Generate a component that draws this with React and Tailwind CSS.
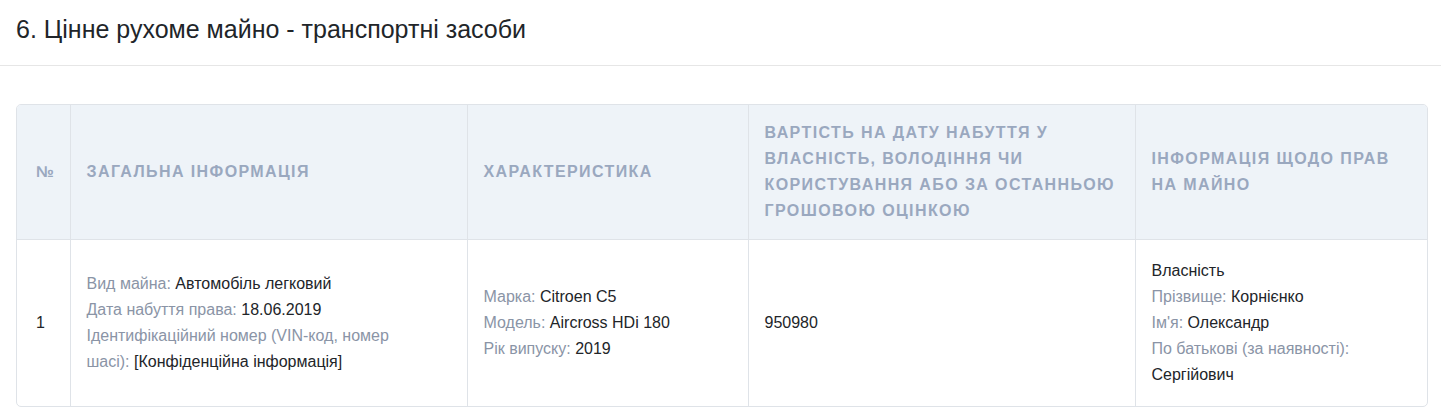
import React from "react";

const Label = ({ children }) => <span className="text-[#8a94a6]">{children}</span>;
const Val = ({ children }) => <span className="text-[#222529]">{children}</span>;

export default function App() {
  const thBase = "py-[15px] text-left align-middle font-bold uppercase text-[16px] leading-[26px] tracking-[1.4px] text-[#9aa8bf]";
  const th = "border-l border-[#dfe3e8] px-4 " + thBase;
  const tdBase = "py-[18px] align-middle text-[16px] leading-[26px] text-[#222529]";
  const td = "border-l border-[#dfe3e8] px-4 " + tdBase;
  return (
    <div className="min-h-[418px] bg-white font-['Liberation_Sans',Arial,sans-serif]">
      <div className="px-4 pt-[14px] pb-[21px]">
        <h2 className="text-[25px] leading-[30px] text-[#212529]">
          6. Цінне рухоме майно - транспортні засоби
        </h2>
      </div>
      <div className="border-t border-[#e6e6e6]" />
      <div className="ml-4 mr-[13px] mt-[38px] overflow-hidden rounded-[5px] border border-[#dfe3e8]">
        <table className="w-full table-fixed border-collapse">
          <colgroup>
            <col className="w-[53px]" />
            <col className="w-[397px]" />
            <col className="w-[281px]" />
            <col className="w-[387px]" />
            <col />
          </colgroup>
          <thead className="bg-[#eef3f8]">
            <tr className="border-b border-[#dfe3e8]">
              <th className={"pl-[19px] pr-2 " + thBase + " tracking-normal"}>№</th>
              <th className={th}>Загальна інформація</th>
              <th className={th}>Характеристика</th>
              <th className={th}>
                Вартість на дату набуття у власність, володіння чи користування або за останньою грошовою оцінкою
              </th>
              <th className={th}>Інформація щодо прав на майно</th>
            </tr>
          </thead>
          <tbody>
            <tr>
              <td className={"pl-[19px] pr-2 " + tdBase}>1</td>
              <td className={td}>
                <div>
                  <Label>Вид майна:</Label> <Val>Автомобіль легковий</Val>
                </div>
                <div>
                  <Label>Дата набуття права:</Label> <Val>18.06.2019</Val>
                </div>
                <div>
                  <Label>Ідентифікаційний номер (VIN-код, номер шасі):{"\u00a0"}</Label>
                  <Val>[Конфіденційна інформація]</Val>
                </div>
              </td>
              <td className={td}>
                <div>
                  <Label>Марка:</Label> <Val>Citroen C5</Val>
                </div>
                <div>
                  <Label>Модель:</Label> <Val>Aircross HDi 180</Val>
                </div>
                <div>
                  <Label>Рік випуску:</Label> <Val>2019</Val>
                </div>
              </td>
              <td className={td}>950980</td>
              <td className={td}>
                <div>
                  <Val>Власність</Val>
                </div>
                <div>
                  <Label>Прізвище:</Label> <Val>Корнієнко</Val>
                </div>
                <div>
                  <Label>Ім'я:</Label> <Val>Олександр</Val>
                </div>
                <div>
                  <Label>По батькові (за наявності):</Label> <Val>Сергійович</Val>
                </div>
              </td>
            </tr>
          </tbody>
        </table>
      </div>
    </div>
  );
}
